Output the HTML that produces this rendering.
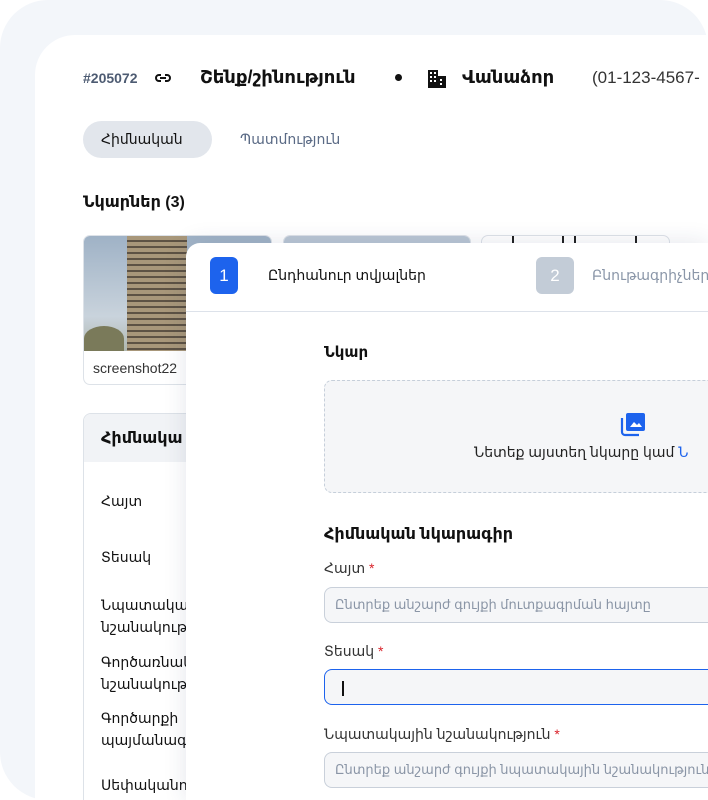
<!DOCTYPE html>
<html><head><meta charset="utf-8">
<style>
*{margin:0;padding:0;box-sizing:border-box}
html,body{width:708px;height:800px;overflow:hidden}
body{background:#fff;font-family:"Liberation Sans","DejaVu Sans",sans-serif;color:#111;position:relative}
.abs{position:absolute;white-space:nowrap}
.outer{position:absolute;left:0;top:0;width:708px;height:800px;background:#f3f6fa;border-radius:48px}
.card{position:absolute;left:35px;top:35px;width:673px;height:765px;background:#fff;border-radius:40px 0 0 0}
.thumb{position:absolute;top:235px;height:150px;border:1px solid #dde2e8;border-radius:7px;overflow:hidden;background:#fff}
.modal{position:absolute;left:186px;top:243px;width:522px;height:557px;background:#fff;border-radius:14px 0 0 0;box-shadow:0 0 24px rgba(30,50,90,.12)}
.inp{position:absolute;left:324px;width:384px;height:36px;border:1px solid #c9d0da;border-right:none;background:#f5f6f8;border-radius:8px 0 0 8px;overflow:hidden}
.ph{position:absolute;left:10px;top:9px;font-size:13px;color:#8a95a6;white-space:nowrap}
.lbl{font-size:14px;color:#333}
.req{color:#d9222a}
.row{font-size:14px;color:#111;left:101px;line-height:22px}
</style></head><body>
<div class="outer"></div>
<div class="card"></div>

<div class="abs" style="left:83px;top:70px;font-size:14px;font-weight:bold;color:#4d5b72">#205072</div>
<svg class="abs" style="left:154px;top:72px" width="18" height="12" viewBox="0 0 18 12"><path d="M7 3H5a3 3 0 0 0 0 6h2 M11 3h2a3 3 0 0 1 0 6h-2 M6 6h6" fill="none" stroke="#111" stroke-width="2"/></svg>
<div class="abs" style="left:200px;top:67px;font-size:18px;font-weight:bold">Շենք/շինություն</div>
<div class="abs" style="left:395px;top:74px;width:7px;height:7px;border-radius:50%;background:#111"></div>
<svg class="abs" style="left:427px;top:67px" width="20" height="22" viewBox="0 0 20 22"><path d="M1 3h10v18H1z M11 9h8v12h-8z" fill="#111"/><g fill="#fff"><rect x="3" y="5" width="2" height="2"/><rect x="7" y="5" width="2" height="2"/><rect x="3" y="9" width="2" height="2"/><rect x="7" y="9" width="2" height="2"/><rect x="3" y="13" width="2" height="2"/><rect x="7" y="13" width="2" height="2"/><rect x="13" y="12" width="2" height="2"/><rect x="13" y="16" width="2" height="2"/></g></svg>
<div class="abs" style="left:462px;top:67px;font-size:18px;font-weight:bold">Վանաձոր</div>
<div class="abs" style="left:592px;top:68px;font-size:17px;color:#333">(01-123-4567-</div>

<div class="abs" style="left:83px;top:121px;width:129px;height:37px;border-radius:19px;background:#e2e6ec"></div>
<div class="abs" style="left:101px;top:131px;font-size:14px">Հիմնական</div>
<div class="abs" style="left:240px;top:131px;font-size:14px;color:#5a6a85">Պատմություն</div>

<div class="abs" style="left:83px;top:192px;font-size:16px;font-weight:bold">Նկարներ (3)</div>

<div class="thumb" style="left:83px;width:189px">
 <div style="height:115px;background:linear-gradient(180deg,#9fb2c6,#c9d3dc 70%,#b0b8b0)"></div>
 <div style="position:absolute;left:43px;top:0;width:60px;height:115px;background:repeating-linear-gradient(180deg,#a8977a 0 4px,#5d5244 4px 6px)"></div>
 <div style="position:absolute;left:0;top:90px;width:40px;height:25px;background:#7a7a5a;border-radius:50% 50% 0 0"></div>
 <div style="position:absolute;left:9px;top:124px;font-size:14px;color:#333">screenshot22</div>
</div>
<div class="thumb" style="left:283px;width:188px"><div style="height:115px;background:linear-gradient(180deg,#b9c6d4,#d8dfe6)"></div></div>
<div class="thumb" style="left:481px;width:189px">
 <div style="position:absolute;left:30px;top:-2px;width:125px;height:30px;border:2px solid #222"></div>
 <div style="position:absolute;left:80px;top:0;width:2px;height:20px;background:#222"></div>
 <div style="position:absolute;left:92px;top:0;width:2px;height:20px;background:#222"></div>
</div>

<div class="abs" style="left:83px;top:413px;width:200px;height:400px;border:1px solid #dde2e8;border-radius:8px;background:#fff;overflow:hidden">
 <div style="height:48px;background:#f1f3f6"></div>
</div>
<div class="abs" style="left:101px;top:428px;font-size:16px;font-weight:bold">Հիմնակա</div>
<div class="abs row" style="top:490px">Հայտ</div>
<div class="abs row" style="top:546px">Տեսակ</div>
<div class="abs row" style="top:594px">Նպատակային<br>նշանակություն</div>
<div class="abs row" style="top:651px">Գործառնական<br>նշանակություն</div>
<div class="abs row" style="top:707px">Գործարքի<br>պայմանագիր</div>
<div class="abs row" style="top:774px">Սեփականություն</div>

<div class="modal" style="overflow:hidden">
 <div style="position:absolute;left:0;top:68px;width:100%;height:1px;background:#dde2ea"></div>
</div>
<div class="abs" style="left:210px;top:257px;width:28px;height:37px;border-radius:6px;background:#1d63ed;color:#fff;font-size:17px;text-align:center;line-height:37px">1</div>
<div class="abs" style="left:268px;top:267px;font-size:14px">Ընդհանուր տվյալներ</div>
<div class="abs" style="left:536px;top:257px;width:38px;height:37px;border-radius:6px;background:#c3ccd7;color:#fff;font-size:17px;text-align:center;line-height:37px">2</div>
<div class="abs" style="left:592px;top:267px;font-size:14px;color:#8a96a8">Բնութագրիչներ</div>

<div class="abs" style="left:324px;top:343px;font-size:15px;font-weight:bold">Նկար</div>
<div class="abs" style="left:324px;top:380px;width:400px;height:113px;border:1.5px dashed #c6cfda;border-radius:8px;background:#f5f6f8"></div>
<svg class="abs" style="left:620px;top:412px" width="26" height="25" viewBox="0 0 26 25"><path d="M2 6v14a3 3 0 0 0 3 3h14" fill="none" stroke="#1d63ed" stroke-width="2.2"/><rect x="6" y="1" width="19" height="18" rx="2" fill="#1d63ed"/><path d="M10 15l4-5 3 3 2-2 3 4z" fill="#fff"/></svg>
<div class="abs" style="left:474px;top:444px;font-size:14px;color:#222">Նետեք այստեղ նկարը կամ <span style="color:#1d63ed">Ն</span></div>

<div class="abs" style="left:324px;top:524px;font-size:16px;font-weight:bold">Հիմնական նկարագիր</div>
<div class="abs lbl" style="left:324px;top:560px">Հայտ <span class="req">*</span></div>
<div class="inp" style="top:587px"><div class="ph">Ընտրեք անշարժ գույքի մուտքագրման հայտը</div></div>
<div class="abs lbl" style="left:324px;top:643px">Տեսակ <span class="req">*</span></div>
<div class="inp" style="top:669px;border:1.5px solid #1d63ed;border-right:none"><div style="position:absolute;left:17px;top:11px;width:1.5px;height:15px;background:#111"></div></div>
<div class="abs lbl" style="left:324px;top:726px">Նպատակային նշանակություն <span class="req">*</span></div>
<div class="inp" style="top:752px"><div class="ph">Ընտրեք անշարժ գույքի նպատակային նշանակությունը</div></div>
</body></html>
